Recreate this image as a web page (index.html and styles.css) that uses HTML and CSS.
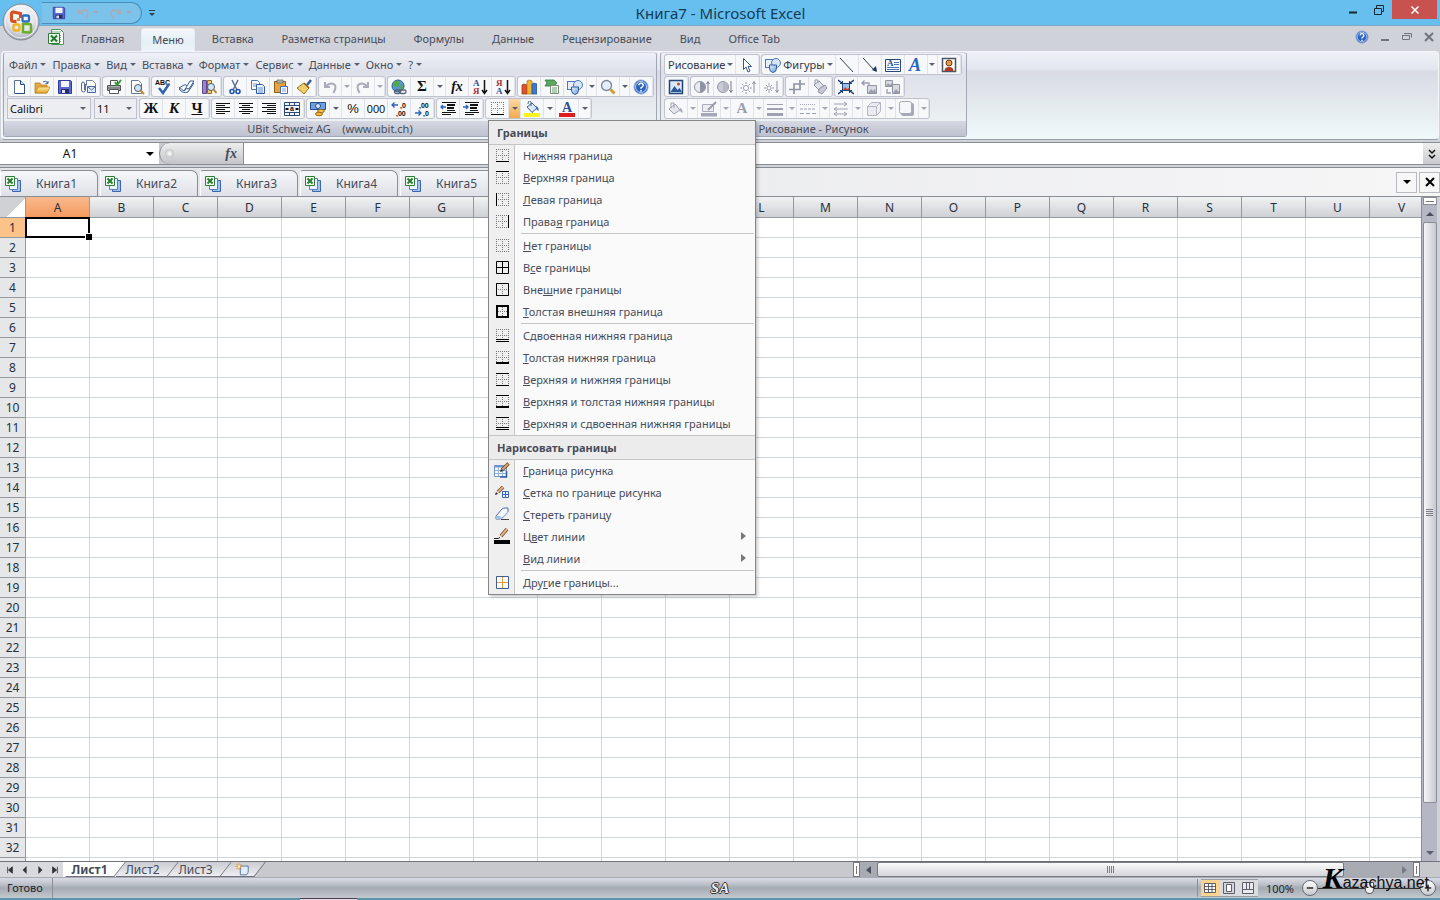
FILE: index.html
```html
<!DOCTYPE html>
<html lang="ru">
<head>
    <meta charset="UTF-8">
    <meta name="viewport" content="width=device-width, initial-scale=1.0">
    <title>Книга7 - Microsoft Excel</title>
    <link rel="stylesheet" href="styles.css">
</head>
<body>
    <!-- Icons -->
    <svg class="sprite" aria-hidden="true">
        <defs>
            <linearGradient id="g-blue" x1="0" y1="0" x2="1" y2="1"><stop offset="0" stop-color="#e8f2fd"/><stop offset="1" stop-color="#6f9ed6"/></linearGradient>
            <linearGradient id="g-gold" x1="0" y1="0" x2="0" y2="1"><stop offset="0" stop-color="#ffe9a0"/><stop offset="1" stop-color="#e5a52c"/></linearGradient>
            <radialGradient id="g-orb" cx=".5" cy=".35" r=".65"><stop offset="0" stop-color="#fff"/><stop offset=".6" stop-color="#e3e5ea"/><stop offset="1" stop-color="#a4a8b2"/></radialGradient>
        </defs>
        <symbol id="i-new" viewBox="0 0 16 16"><path d="M3.5 1.5h6l4 4v9h-10z" fill="#fff" stroke="#5a7396"/><path d="M9.5 1.5v4h4" fill="#c8daf0" stroke="#2c4c80"/><path d="M13.5 6v8.500h-9" fill="none" stroke="#2c4c80"/></symbol>
        <symbol id="i-open" viewBox="0 0 16 16"><path d="M1 14V4h5l1 2h6v8z" fill="#e8a93a" stroke="#a8741c" stroke-width=".7"/><path d="M1 14L4 8h12l-3 6z" fill="url(#g-gold)" stroke="#b57f20" stroke-width=".7"/><path d="M9 3q3-2 5 1m0-2v2.500h-2.500" fill="none" stroke="#3f66a5"/></symbol>
        <symbol id="i-save" viewBox="0 0 16 16"><path d="M1.500 1.500h12l1 1v12h-13z" fill="#5b68d0" stroke="#343a9c"/><path d="M4 2h8v6H4z" fill="#f0f4fb"/><path d="M4 10h8v4H4z" fill="#252c66"/><path d="M5 11h3v3H5z" fill="#dde3f4"/></symbol>
        <symbol id="i-mail" viewBox="0 0 16 16"><path d="M6.500 6.500V1.500h6l3 3v5" fill="#fff" stroke="#6a7fa3"/><path d="M7.500 7.500h8v6h-8z" fill="#dce8f8" stroke="#4c6a9c"/><path d="M8 8l3.500 3L15 8" fill="none" stroke="#4c6a9c"/><path d="M5.500 5v6q0 2-2 2t-2-2V5q0-2 1.500-2T4.500 5v6" fill="none" stroke="#5a6f96"/></symbol>
        <symbol id="i-print" viewBox="0 0 16 16"><path d="M4.500 6V1.500h7V6" fill="#fff" stroke="#555"/><path d="M1.500 6.500h13v5h-13z" fill="#a9adb5" stroke="#555"/><path d="M3.500 10.500h9v4h-9z" fill="#fff" stroke="#555"/><path d="M2 9h12" stroke="#666"/><path d="M9 3l2 3 4-5" fill="none" stroke="#2e9a32" stroke-width="2"/></symbol>
        <symbol id="i-preview" viewBox="0 0 16 16"><path d="M2.500 1.500h7l3 3v10h-10z" fill="#fff" stroke="#66788f"/><circle cx="9" cy="9" r="3.500" fill="#cfe5f8" stroke="#4b5a70"/><path d="M11.500 11.500l3.500 3.500" stroke="#c58a2c" stroke-width="2"/></symbol>
        <symbol id="i-book" viewBox="0 0 16 16"><path d="M1 9l5-3q2-1 3 1l3-5h4l-5 8q-2-2-5 2-2-2-5-3z" fill="#fff" stroke="#36598f"/><path d="M9 7l-3 5M1 10q4 5 9 3l6-9" fill="none" stroke="#36598f"/></symbol>
        <symbol id="i-research" viewBox="0 0 16 16"><path d="M1.500 1.500h4v13h-4z" fill="#9f84c8" stroke="#5c4a8c"/><path d="M6.500 1.500h4v13h-4z" fill="#f2cb61" stroke="#936c25"/><circle cx="10" cy="8" r="3.500" fill="#d4e8f9" stroke="#4b5a70"/><path d="M12.500 10.500L15.500 14" stroke="#c58a2c" stroke-width="2"/></symbol>
        <symbol id="i-cut" viewBox="0 0 16 16"><path d="M5 1l5 10M11 1L6 11" stroke="#5b6f94" stroke-width="1.500"/><circle cx="5" cy="12.500" r="2" fill="none" stroke="#1f55b2" stroke-width="1.600"/><circle cx="11" cy="12.500" r="2" fill="none" stroke="#1f55b2" stroke-width="1.600"/></symbol>
        <symbol id="i-copy" viewBox="0 0 16 16"><path d="M1.500 1.500h6l2 2v7h-8z" fill="#fff" stroke="#4d74b5"/><path d="M3 5h4M3 7h4" stroke="#6c92cb"/><path d="M6.500 5.500h6l2 2v7h-8z" fill="#eaf2fd" stroke="#2f5ca8"/><path d="M8 9h5M8 11h5M8 13h5" stroke="#6c92cb"/></symbol>
        <symbol id="i-paste" viewBox="0 0 16 16"><path d="M1.500 2.500h11v11h-11z" fill="#e8a43a" stroke="#8c5c16"/><path d="M4 1h6v3H4z" fill="#aeb4be" stroke="#555" stroke-width=".6"/><path d="M7.500 7.500h7v7h-7z" fill="#fff" stroke="#4a6fab"/><path d="M9 10h4M9 12h4" stroke="#7f9fd0"/></symbol>
        <symbol id="i-brush" viewBox="0 0 16 16"><path d="M15 1l-4 5" stroke="#3d5d9b" stroke-width="2.500"/><path d="M8 4l5 5-5 6-7-6z" fill="#f0cf68" stroke="#a07828"/><path d="M8 4l5 5" stroke="#8c5e1a" stroke-width="1.500"/></symbol>
        <symbol id="i-undo" viewBox="0 0 16 16"><path d="M3 3v5h5" fill="none" stroke="#a9adb9" stroke-width="2"/><path d="M3.500 7.500q4-4 8-2.500t0 9" fill="none" stroke="#a9adb9" stroke-width="2"/></symbol>
        <symbol id="i-redo" viewBox="0 0 16 16"><path d="M13 3v5H8" fill="none" stroke="#a9adb9" stroke-width="2"/><path d="M12.500 7.500q-4-4-8-2.500t0 9" fill="none" stroke="#a9adb9" stroke-width="2"/></symbol>
        <symbol id="i-link" viewBox="0 0 16 16"><circle cx="7" cy="7" r="6" fill="#5b97cf" stroke="#2c5f93"/><path d="M3 3q3-2 5-1l1 3-3 3-3-1zM8 8l4-2q0 4-3 5z" fill="#53a848"/><rect x="3.500" y="11" width="6" height="3.500" rx="1.700" fill="none" stroke="#56647d" stroke-width="1.300"/><rect x="8.500" y="11" width="6.500" height="3.500" rx="1.700" fill="none" stroke="#56647d" stroke-width="1.300"/></symbol>
        <symbol id="i-chart" viewBox="0 0 16 16"><path d="M1 6l2-1 3 1v9H1z" fill="#e0532c" stroke="#8d2b14" stroke-width=".7"/><path d="M6 2l2-1 3 1v13H6z" fill="#f4b531" stroke="#a8701a" stroke-width=".7"/><path d="M11 5l2-1 3 1v10h-5z" fill="#3e79cf" stroke="#224b91" stroke-width=".7"/></symbol>
        <symbol id="i-smart" viewBox="0 0 16 16"><path d="M1 1h9l3 3-3 3H1l2-3z" fill="#5ca860" stroke="#2f7638" stroke-width=".8"/><path d="M6.500 6.500h8v8h-8z" fill="#f6f9f4" stroke="#7b8b7c"/><path d="M8 9h5M8 11h5M8 13h5" stroke="#6ea273"/></symbol>
        <symbol id="i-shapes" viewBox="0 0 16 16"><rect x=".500" y="2.500" width="8" height="8" fill="#e6effa" stroke="#4d79b8"/><circle cx="11" cy="6" r="4.500" fill="#d6e6f8" stroke="#4d79b8"/><path d="M4.500 8h7v3q0 4-3.500 4.500Q4.500 15 4.500 11z" fill="url(#g-blue)" stroke="#2e5d9e"/></symbol>
        <symbol id="i-zoom" viewBox="0 0 16 16"><circle cx="6.500" cy="6.500" r="5" fill="#e2effb" stroke="#7d8798" stroke-width="1.300"/><path d="M10.500 10.500l4 4" stroke="#d39b32" stroke-width="3"/></symbol>
        <symbol id="i-help" viewBox="0 0 16 16"><circle cx="8" cy="8" r="7" fill="#2a62c2" stroke="#8da9d6"/><circle cx="8" cy="8" r="5.500" fill="none" stroke="#e4edfa" stroke-width=".8"/><path d="M5.800 6.300Q6 4.200 8 4.200t2.200 2Q10.200 7.500 8 8.800v1" fill="none" stroke="#fff" stroke-width="1.500"/><path d="M7.200 11h1.600v1.500H7.200z" fill="#fff"/></symbol>
        <symbol id="i-left" viewBox="0 0 16 16"><path d="M1 2h14v1H1zM1 4h9v1H1zM1 6h14v1H1zM1 8h9v1H1zM1 10h14v1H1zM1 12h9v1H1z" fill="#111"/></symbol>
        <symbol id="i-center" viewBox="0 0 16 16"><path d="M1 2h14v1H1zM4 4h8v1H4zM1 6h14v1H1zM4 8h8v1H4zM1 10h14v1H1zM4 12h8v1H4z" fill="#111"/></symbol>
        <symbol id="i-right" viewBox="0 0 16 16"><path d="M1 2h14v1H1zM6 4h9v1H6zM1 6h14v1H1zM6 8h9v1H6zM1 10h14v1H1zM6 12h9v1H6z" fill="#111"/></symbol>
        <symbol id="i-money" viewBox="0 0 16 16"><path d="M.500 1.500h15v7H.500z" fill="#6ea0dc" stroke="#244f94"/><circle cx="8" cy="5" r="2.500" fill="#d9e8f8" stroke="#244f94"/><ellipse cx="11" cy="10" rx="3.500" ry="1.500" fill="#f8cf55" stroke="#9a6a14"/><ellipse cx="9" cy="13" rx="3.500" ry="1.800" fill="#f2b534" stroke="#9a6a14"/></symbol>
        <symbol id="i-outdent" viewBox="0 0 16 16"><path d="M2 1h14v1H2zM7 3h8v2H7zM7 6h7v2H7zM7 9h8v1H7zM2 11h14v1H2zM2 13h9v1H2z" fill="#111"/><path d="M6 6H1M3 4L1 6l2 2" fill="none" stroke="#2c62bb" stroke-width="1.300"/></symbol>
        <symbol id="i-indent" viewBox="0 0 16 16"><path d="M2 1h14v1H2zM7 3h8v2H7zM7 6h7v2H7zM7 9h8v1H7zM2 11h14v1H2zM2 13h9v1H2z" fill="#111"/><path d="M0 6h5M3 4l2 2-2 2" fill="none" stroke="#2c62bb" stroke-width="1.300"/></symbol>
        <symbol id="i-fill" viewBox="0 0 16 16"><path d="M0 12h16v4H0z" fill="#f8f31e"/><path d="M3 6l5-4 5 5-5 4.500z" fill="#dbe6f5" stroke="#456089"/><path d="M7 5V1.500Q7 0 5.500 0T4 3" fill="none" stroke="#456089"/><path d="M12 5q3 1 2.500 5Q12 9 12 7z" fill="#3d6cb5"/></symbol>
        <symbol id="i-cursor" viewBox="0 0 16 16"><path d="M4.500 1.500v11l2.500-2.500 2 5 2-1-2-4.500h3.500z" fill="#fff" stroke="#33578f"/></symbol>
        <symbol id="i-line" viewBox="0 0 16 16"><path d="M1 1l13 14" stroke="#2b3c5c"/></symbol>
        <symbol id="i-arrow" viewBox="0 0 16 16"><path d="M1 1l12 13" stroke="#2b3c5c"/><path d="M15 15l-5-2 4-4z" fill="#1c335e"/></symbol>
        <symbol id="i-clip" viewBox="0 0 16 16"><path d="M1.500 1.500h13v13h-13z" fill="#fff" stroke="#4c5566" stroke-width="1.500"/><circle cx="8" cy="6" r="3" fill="#e89a4c" stroke="#6b3a12"/><path d="M3.500 14q0-4 4.500-4t4.500 4z" fill="#b13a22"/></symbol>
        <symbol id="i-picture" viewBox="0 0 16 16"><path d="M1.500 1.500h13v13h-13z" fill="#d9e9fa" stroke="#24457a" stroke-width="1.500"/><path d="M2.500 13l4-6 3 4 2-2 2.500 4z" fill="#2a5698"/><circle cx="10.500" cy="5" r="1.500" fill="#d0452c"/></symbol>
        <symbol id="i-contrast-up" viewBox="0 0 16 16"><circle cx="6" cy="8" r="5.500" fill="#e9ebf1" stroke="#9095a4"/><path d="M6 2.500a5.500 5.500 0 0 1 0 11z" fill="#8f94a3"/><path d="M14 14V3M12.500 5L14 2.500 15.500 5" fill="none" stroke="#767b8b"/></symbol>
        <symbol id="i-contrast-down" viewBox="0 0 16 16"><circle cx="6" cy="8" r="5.500" fill="#c9ccd6" stroke="#9095a4"/><path d="M6 2.500a5.500 5.500 0 0 1 0 11z" fill="#b5b8c4"/><path d="M14 2v11M12.500 11l1.500 2.500L15.500 11" fill="none" stroke="#767b8b"/></symbol>
        <symbol id="i-bright-up" viewBox="0 0 16 16"><circle cx="6" cy="9" r="2.500" fill="#fff" stroke="#9a9eac"/><path d="M6 3v2M6 13v2M0 9h2M10 9h2M2 5l1.500 1.500M10 5L8.500 6.500M2 13l1.500-1.500M10 13l-1.500-1.500" stroke="#9a9eac"/><path d="M14 14V3M12.500 5L14 2.500 15.500 5" fill="none" stroke="#8a8e9d"/></symbol>
        <symbol id="i-bright-down" viewBox="0 0 16 16"><circle cx="6" cy="9" r="2" fill="#fff" stroke="#9a9eac"/><path d="M6 4v2M6 12v2M1 9h2M9 9h2M3 6l1 1M9 6L8 7M3 12l1-1M9 12l-1-1" stroke="#9a9eac"/><path d="M14 2v11M12.500 11l1.500 2.500L15.500 11" fill="none" stroke="#8a8e9d"/></symbol>
        <symbol id="i-crop" viewBox="0 0 16 16"><path d="M5 15V5h11M0 10.500h11V1" fill="none" stroke="#8f94a3" stroke-width="1.700"/></symbol>
        <symbol id="i-recolor" viewBox="0 0 16 16"><path d="M2 6l5-4 5 5-5 4z" fill="#dfe1e8" stroke="#9095a4"/><path d="M8 9l5-3 2 3-5 6-4-2z" fill="#c6c9d3" stroke="#9095a4"/><path d="M6 4V1H3v4" fill="none" stroke="#9095a4"/></symbol>
        <symbol id="i-compress" viewBox="0 0 16 16"><path d="M4.500 4.500h7v7h-7z" fill="#9cc0ea" stroke="#24457a"/><path d="M5 11l2-3 2 2 2-1v2z" fill="#b8452f"/><path d="M0 1l4 3M16 1l-4 3M0 15l4-3M16 15l-4-3" stroke="#1f3f78" stroke-width="1.500"/><path d="M2 4.500h2.500V2M14 4.500h-2.500V2M2 11.500h2.500V14M14 11.500h-2.500V14" fill="none" stroke="#1f3f78"/></symbol>
        <symbol id="i-change" viewBox="0 0 16 16"><path d="M6.500 6.500h9v8h-9z" fill="#d9dbe2" stroke="#9095a4"/><path d="M7 14l3-4 2 2 2-2 1 4z" fill="#9a9eab"/><path d="M1 4h7v3M3.500 1.500L1 4l2.500 2.500" fill="none" stroke="#9a9eac" stroke-width="1.300"/></symbol>
        <symbol id="i-reset" viewBox="0 0 16 16"><path d="M1.500 1.500h7v6h-7zM8.500 5.500h7v9h-7z" fill="#d9dbe2" stroke="#9095a4"/><path d="M2 7l2-3 2 2 2-2v3zM9 14l3-4 3 3v1z" fill="#9a9eab"/><path d="M3 10v4h4" fill="none" stroke="#9a9eac" stroke-width="1.300"/></symbol>
        <symbol id="i-fill-off" viewBox="0 0 16 16"><path d="M1 8l6-5 5 6-6 4z" fill="#e4e6ec" stroke="#9ea2b0"/><path d="M6 7V2H3v5" fill="none" stroke="#9ea2b0"/><path d="M12 7q3 1 2.500 5Q12 11 12 9z" fill="#a3a7b4"/></symbol>
        <symbol id="i-outline-off" viewBox="0 0 16 16"><path d="M0 12h16v3.500H0z" fill="#a3a7b6"/><path d="M1.500 3.500h11v7h-11z" fill="#eceef3" stroke="#a9adb9"/><path d="M15 1L7 9" stroke="#989cab" stroke-width="2"/></symbol>
        <symbol id="i-weight" viewBox="0 0 16 16"><path d="M0 3h16v1H0zM0 7h16v2H0zM0 12h16v3H0z" fill="#9ea2b2"/></symbol>
        <symbol id="i-dash" viewBox="0 0 16 16"><path d="M0 3.500h16" stroke="#9ea2b2" stroke-dasharray="1 1"/><path d="M0 8h16" stroke="#9ea2b2" stroke-dasharray="3 1"/><path d="M0 12.500h16" stroke="#9ea2b2" stroke-dasharray="4 2"/></symbol>
        <symbol id="i-arrows" viewBox="0 0 16 16"><path d="M1 3h13M11 1l3 2-3 2M15 8H1M4 6L1 8l3 2M1 13h13M4 11l-3 2 3 2M11 11l3 2-3 2" fill="none" stroke="#9ea2b2"/></symbol>
        <symbol id="i-cube" viewBox="0 0 16 16"><path d="M1.500 5.500h9v9h-9zM1.500 5.500l4-4h9l-4 4M14.500 1.500v9l-4 4" fill="#e9ebf0" stroke="#b4b7c2"/></symbol>
        <symbol id="i-shadow" viewBox="0 0 16 16"><rect x="2" y="2" width="13" height="13" rx="2" fill="#a5a9b8"/><rect x=".500" y=".500" width="12" height="12" rx="2" fill="#f6f7fa" stroke="#a5a9b8"/></symbol>
        <symbol id="i-xl" viewBox="0 0 16 16"><path d="M3.500.500h9l3 3v12h-12z" fill="#fff" stroke="#4d9a58"/><path d="M4 3h9" stroke="#7db884"/><path d="M12.500 6v8" stroke="#7db884" stroke-dasharray="1 1"/><path d="M.500 4.500h11v10H.500z" fill="#eaf6ea" stroke="#2f7d37"/><path d="M3 6.500l6 6M9 6.500l-6 6" fill="none" stroke="#237a2c" stroke-width="2"/></symbol>
        <symbol id="i-books" viewBox="0 0 16 16"><path d="M7.500 4.500h8v11h-8z" fill="#9fc3ee" stroke="#3a67ab"/><path d="M4.500 2.500h8v11h-8z" fill="#e9f2fd" stroke="#5b7fb8"/><path d="M.500.500h9v9h-9z" fill="#f1faf0" stroke="#2f7d37"/><path d="M2.500 2.500l5 5M7.500 2.500l-5 5" stroke="#237a2c" stroke-width="1.800"/></symbol>

        <!-- Border icons share one dotted base -->
        <symbol id="i-none" viewBox="0 0 13 13"><path d="M0 .500h13M0 6.500h13M0 12.500h13M.500 0v13M6.500 0v13M12.500 0v13" stroke="#777" stroke-dasharray="1 1" shape-rendering="crispEdges"/></symbol>
        <symbol id="i-bottom" viewBox="0 0 13 13"><use href="#i-none"/><path d="M0 12h13v1H0z"/></symbol>
        <symbol id="i-top" viewBox="0 0 13 13"><use href="#i-none"/><path d="M0 0h13v1H0z"/></symbol>
        <symbol id="i-bleft" viewBox="0 0 13 13"><use href="#i-none"/><path d="M0 0h1v13H0z"/></symbol>
        <symbol id="i-bright" viewBox="0 0 13 13"><use href="#i-none"/><path d="M12 0h1v13h-1z"/></symbol>
        <symbol id="i-all" viewBox="0 0 13 13"><path d="M.500.500h12v12H.500zM.500 6.500h12M6.500.500v12" fill="none" stroke="#000"/></symbol>
        <symbol id="i-outer" viewBox="0 0 13 13"><use href="#i-none"/><path d="M.500.500h12v12H.500z" fill="none" stroke="#000"/></symbol>
        <symbol id="i-thick" viewBox="0 0 13 13"><use href="#i-none"/><path d="M1 1h11v11H1z" fill="none" stroke="#000" stroke-width="2"/></symbol>
        <symbol id="i-double" viewBox="0 0 13 13"><use href="#i-none"/><path d="M0 9h13v4H0z" fill="#eee"/><path d="M0 10h13v1H0zM0 12h13v1H0z"/></symbol>
        <symbol id="i-thickb" viewBox="0 0 13 13"><use href="#i-none"/><path d="M0 11h13v2H0z"/></symbol>
        <symbol id="i-topbot" viewBox="0 0 13 13"><use href="#i-none"/><path d="M0 0h13v1H0zM0 12h13v1H0z"/></symbol>
        <symbol id="i-topthick" viewBox="0 0 13 13"><use href="#i-none"/><path d="M0 0h13v1H0zM0 11h13v2H0z"/></symbol>
        <symbol id="i-topdouble" viewBox="0 0 13 13"><use href="#i-double"/><path d="M0 0h13v1H0z"/></symbol>
        <symbol id="i-more" viewBox="0 0 13 13"><path d="M.500.500h12v12H.500z" fill="#fff" stroke="#3f5f94"/><path d="M1 6.500h11M6.500 1v11" stroke="#e59a3c"/></symbol>
        <symbol id="i-draw" viewBox="0 0 16 16"><path d="M.500 3.500h12v11H.500z" fill="#f6faff" stroke="#7397cb"/><path d="M.500 3.500h12v2H.500z" fill="#6b94d0"/><path d="M1 8.500h11M1 11.500h11M4.500 5v9M8.500 5v9" stroke="#93b1da"/><path d="M12.500 9v6H6" fill="none" stroke="#2f5c9e" stroke-width="1.500"/><path d="M14.500 1.500L8 8" stroke="#704a2c" stroke-width="3.500"/><path d="M14 2L8.500 7.500" stroke="#d9a273" stroke-width="2"/><path d="M6 10l1-3 2 2z" fill="#222"/></symbol>
        <symbol id="i-drawgrid" viewBox="0 0 16 16"><path d="M9 3L4 8" stroke="#704a2c" stroke-width="3.500"/><path d="M9 3L4 8" stroke="#e3b184" stroke-width="2"/><path d="M1 11l1-3 2 2z" fill="#222"/><path d="M8.500 7.500h6v6h-6zM8.500 10.500h6M11.500 7.500v6" fill="#e7f0fc" stroke="#3a68b0"/></symbol>
        <symbol id="i-erase" viewBox="0 0 16 16"><path d="M2 10l6-7q1-1 3-1h3v4l-6 6q-1 1-3 1H2z" fill="#f3f7fd" stroke="#51709f"/><path d="M2 10h4l2 2 6-7v2l-6 6H2z" fill="#a3bfe4"/><path d="M7 13.500h8" stroke="#444"/></symbol>
        <symbol id="i-linecolor" viewBox="0 0 16 16"><path d="M0 12h16v4H0z"/><path d="M13 1L7 8" stroke="#704a2c" stroke-width="3.500"/><path d="M13 1L7 8" stroke="#e3b184" stroke-width="2"/><path d="M0 10.500h4l2-1" fill="none" stroke="#222"/></symbol>
        <symbol id="i-office" viewBox="0 0 38 38"><circle cx="19" cy="19" r="18" fill="url(#g-orb)" stroke="#7d8796"/><circle cx="19" cy="19" r="16" fill="none" stroke="#fff" stroke-opacity=".8"/><path d="M18.500 15V10.500l-7-1.500q-2 0-2 2v6q0 1.500 2 1.500h3" fill="none" stroke="#d8501e" stroke-width="3"/><rect x="20.500" y="12.500" width="6.500" height="6" rx="1.500" fill="none" stroke="#2e6fc4" stroke-width="2.300"/><rect x="11.500" y="21.500" width="6" height="6" rx="1.500" fill="none" stroke="#f0b322" stroke-width="2.300"/><path d="M21 21h6.500q1.500 0 1.500 2v5q0 1.500-2 1.500l-6-.500z" fill="none" stroke="#6cae2c" stroke-width="2.600"/><path d="M15 15h3v3h-3z" fill="#f0882c"/></symbol>
        <symbol id="i-newsheet" viewBox="0 0 16 16"><path d="M5.500 3.500h9v7l-2 3h-7z" fill="#e3eefb" stroke="#4c6a9a"/><path d="M4 0v8M0 4h8M1 1l6 6M7 1L1 7" stroke="#e0942a"/><circle cx="4" cy="4" r="1.500" fill="#fff3b5"/></symbol>
        <symbol id="i-v1" viewBox="0 0 14 14"><path d="M1.500 2.500h11v9h-11zM1.500 5.500h11M1.500 8.500h11M5.500 2.500v9M9 2.500v9" fill="#fff" stroke="#5a5f6a"/></symbol>
        <symbol id="i-v2" viewBox="0 0 14 14"><path d="M1.500 1.500h11v11h-11z" fill="#d4d6db" stroke="#5a5f6a"/><path d="M4.500 3.500h5v7h-5z" fill="#fff" stroke="#5a5f6a"/></symbol>
        <symbol id="i-v3" viewBox="0 0 14 14"><path d="M1.500 1.500h11v11h-11z" fill="#e9eaed" stroke="#5a5f6a"/><path d="M5.500 1.500v7h3v-7M1.500 8.500h11" fill="none" stroke="#5a5f6a"/></symbol>
    </svg>

    <header class="titlebar">
        <button class="office-button" aria-label="Office"><svg><use href="#i-office"/></svg></button>
        <div class="quick-access">
            <button aria-label="Сохранить"><svg class="ico small"><use href="#i-save"/></svg></button>
            <button aria-label="Отменить"><svg class="ico small"><use href="#i-undo"/></svg><i class="tri pale"></i></button>
            <button aria-label="Вернуть"><svg class="ico small"><use href="#i-redo"/></svg><i class="tri pale"></i></button>
        </div>
        <button class="qa-more" aria-label="Настройка панели"><i class="tri"></i></button>
        <h1>Книга7 - Microsoft Excel</h1>
        <div class="window-buttons">
            <button aria-label="Свернуть"><svg viewBox="0 0 12 12"><path d="M2 8.500h8" stroke="#14262f" stroke-width="2"/></svg></button>
            <button aria-label="Развернуть"><svg viewBox="0 0 12 12"><path d="M1.500 4.500h7v6h-7zM3.500 4v-2.500h7v6H9" fill="none" stroke="#14262f"/></svg></button>
            <button class="close" aria-label="Закрыть"><svg viewBox="0 0 12 12"><path d="M2.500 2.500l7 7M9.500 2.500l-7 7" stroke="#fff" stroke-width="1.500"/></svg></button>
        </div>
    </header>

    <nav class="ribbon-tabs">
        <svg class="ico"><use href="#i-xl"/></svg>
        <button>Главная</button>
        <button class="active">Меню</button>
        <button>Вставка</button>
        <button>Разметка страницы</button>
        <button>Формулы</button>
        <button>Данные</button>
        <button>Рецензирование</button>
        <button>Вид</button>
        <button>Office Tab</button>
        <div class="doc-buttons">
            <button aria-label="Справка"><svg class="ico small"><use href="#i-help"/></svg></button>
            <button aria-label="Свернуть книгу"><svg viewBox="0 0 12 12"><path d="M2 9h8" stroke="#70757f" stroke-width="2"/></svg></button>
            <button aria-label="Восстановить книгу"><svg viewBox="0 0 12 12"><path d="M1.500 4.500h7v4h-7zM3 2.500h7.500v4" fill="none" stroke="#70757f"/><path d="M1 4h8v1H1z" fill="#70757f"/></svg></button>
            <button aria-label="Закрыть книгу"><svg viewBox="0 0 12 12"><path d="M2 2l8 8M10 2l-8 8" stroke="#70757f" stroke-width="2"/></svg></button>
        </div>
    </nav>

    <div class="ribbon">
        <section class="panel panel-main">
            <div class="menubar">
                <button>Файл<i class="tri"></i></button>
                <button>Правка<i class="tri"></i></button>
                <button>Вид<i class="tri"></i></button>
                <button>Вставка<i class="tri"></i></button>
                <button>Формат<i class="tri"></i></button>
                <button>Сервис<i class="tri"></i></button>
                <button>Данные<i class="tri"></i></button>
                <button>Окно<i class="tri"></i></button>
                <button>?<i class="tri"></i></button>
            </div>
            <div class="toolrow">
                <div class="group">
                    <button aria-label="Создать"><svg class="ico"><use href="#i-new"/></svg></button>
                    <button aria-label="Открыть"><svg class="ico"><use href="#i-open"/></svg></button>
                    <button aria-label="Сохранить"><svg class="ico"><use href="#i-save"/></svg></button>
                    <button aria-label="Отправить"><svg class="ico"><use href="#i-mail"/></svg></button>
                </div>
                <div class="group">
                    <button aria-label="Печать"><svg class="ico"><use href="#i-print"/></svg></button>
                    <button aria-label="Просмотр"><svg class="ico"><use href="#i-preview"/></svg></button>
                </div>
                <div class="group">
                    <button aria-label="Орфография"><svg class="ico" viewBox="0 0 16 16"><text class="abc" x="0" y="6">ABC</text><path d="M4 9l4 5 6-9" fill="none" stroke="#2f62b4" stroke-width="2.500"/></svg></button>
                    <button aria-label="Тезаурус"><svg class="ico"><use href="#i-book"/></svg></button>
                    <button aria-label="Справочники"><svg class="ico"><use href="#i-research"/></svg></button>
                </div>
                <div class="group">
                    <button aria-label="Вырезать"><svg class="ico"><use href="#i-cut"/></svg></button>
                    <button aria-label="Копировать"><svg class="ico"><use href="#i-copy"/></svg></button>
                    <button aria-label="Вставить"><svg class="ico"><use href="#i-paste"/></svg></button>
                    <button aria-label="Формат по образцу"><svg class="ico"><use href="#i-brush"/></svg></button>
                </div>
                <div class="group">
                    <button aria-label="Отменить"><svg class="ico"><use href="#i-undo"/></svg></button>
                    <button class="drop" aria-label="Список отмены"><i class="tri pale"></i></button>
                    <button aria-label="Вернуть"><svg class="ico"><use href="#i-redo"/></svg></button>
                    <button class="drop" aria-label="Список возврата"><i class="tri pale"></i></button>
                </div>
                <div class="group">
                    <button aria-label="Гиперссылка"><svg class="ico"><use href="#i-link"/></svg></button>
                    <button class="glyph" aria-label="Сумма">Σ</button>
                    <button class="drop wide" aria-label="Другие функции"><i class="tri"></i></button>
                    <button class="glyph fx" aria-label="Функция">fx</button>
                    <button aria-label="По возрастанию"><svg class="ico" viewBox="0 0 16 16"><text class="letter blue" x="1" y="7">А</text><text class="letter red" x="1" y="15">Я</text><path d="M12.500 1v13M10 11l2.500 3.500L15 11" fill="none" stroke="#111" stroke-width="1.500"/></svg></button>
                    <button aria-label="По убыванию"><svg class="ico" viewBox="0 0 16 16"><text class="letter red" x="1" y="7">Я</text><text class="letter blue" x="1" y="15">А</text><path d="M12.500 1v13M10 11l2.500 3.500L15 11" fill="none" stroke="#111" stroke-width="1.500"/></svg></button>
                </div>
                <div class="group">
                    <button aria-label="Диаграмма"><svg class="ico"><use href="#i-chart"/></svg></button>
                    <button aria-label="SmartArt"><svg class="ico"><use href="#i-smart"/></svg></button>
                    <button aria-label="Фигуры"><svg class="ico"><use href="#i-shapes"/></svg></button>
                    <button class="drop" aria-label="Список фигур"><i class="tri"></i></button>
                    <button aria-label="Масштаб"><svg class="ico"><use href="#i-zoom"/></svg></button>
                    <button class="drop" aria-label="Список масштабов"><i class="tri"></i></button>
                    <button aria-label="Справка"><svg class="ico"><use href="#i-help"/></svg></button>
                </div>
            </div>
            <div class="toolrow">
                <label class="combo font-name"><select aria-label="Шрифт"><option>Calibri</option></select><i class="tri"></i></label>
                <label class="combo font-size"><select aria-label="Размер шрифта"><option>11</option></select><i class="tri"></i></label>
                <div class="group">
                    <button class="glyph" aria-label="Полужирный">Ж</button>
                    <button class="glyph" aria-label="Курсив"><i>К</i></button>
                    <button class="glyph" aria-label="Подчёркнутый"><u>Ч</u></button>
                </div>
                <div class="group">
                    <button aria-label="По левому краю"><svg class="ico"><use href="#i-left"/></svg></button>
                    <button aria-label="По центру"><svg class="ico"><use href="#i-center"/></svg></button>
                    <button aria-label="По правому краю"><svg class="ico"><use href="#i-right"/></svg></button>
                    <button aria-label="Объединить ячейки"><svg class="ico" viewBox="0 0 16 16"><path d="M.500 1.500h15v13H.500zM.500 4.500h15M.500 11.500h15M5.500 1.500v3M10.500 1.500v3M5.500 11.500v3M10.500 11.500v3" fill="#f0f4fa" stroke="#2b4877"/><text class="tiny" x="6" y="10">a</text><path d="M1.500 8h3M11.500 8h3" stroke="#111" stroke-width="2"/></svg></button>
                </div>
                <div class="group">
                    <button aria-label="Денежный формат"><svg class="ico"><use href="#i-money"/></svg></button>
                    <button class="drop wide" aria-label="Список валют"><i class="tri"></i></button>
                    <button class="number percent-sign">%</button>
                    <button class="number">000</button>
                    <button aria-label="Увеличить разрядность"><svg class="ico" viewBox="0 0 16 16"><path d="M7 4H1M3.500 1.500L1 4l2.500 2.500" fill="none" stroke="#2c62bb" stroke-width="1.300"/><text class="tiny" x="9" y="7">,0</text><text class="tiny" x="5" y="15">,00</text></svg></button>
                    <button aria-label="Уменьшить разрядность"><svg class="ico" viewBox="0 0 16 16"><text class="tiny" x="5" y="7">,00</text><path d="M1 12h6M4.500 9.500L7 12l-2.500 2.500" fill="none" stroke="#2c62bb" stroke-width="1.300"/><text class="tiny" x="9" y="15">,0</text></svg></button>
                </div>
                <div class="group">
                    <button aria-label="Уменьшить отступ"><svg class="ico"><use href="#i-outdent"/></svg></button>
                    <button aria-label="Увеличить отступ"><svg class="ico"><use href="#i-indent"/></svg></button>
                </div>
                <div class="group has-menu">
                    <button aria-label="Границы"><svg class="ico border-ico"><use href="#i-bottom"/></svg></button>
                    <button class="drop wide pressed" aria-label="Список границ"><i class="tri"></i></button>
                    <button aria-label="Заливка"><svg class="ico"><use href="#i-fill"/></svg></button>
                    <button class="drop wide" aria-label="Цвет заливки"><i class="tri"></i></button>
                    <button aria-label="Цвет текста"><svg class="ico" viewBox="0 0 16 16"><path d="M0 12h16v4H0z" fill="#e01b1b"/><text class="letter blue big" x="3" y="11">A</text></svg></button>
                    <button class="drop wide" aria-label="Список цветов"><i class="tri"></i></button>

                    <!-- Borders drop-down -->
                    <div class="menu">
                        <h2>Границы</h2>
                        <button><svg><use href="#i-bottom"/></svg><span>Ни<u>ж</u>няя граница</span></button>
                        <button><svg><use href="#i-top"/></svg><span><u>В</u>ерхняя граница</span></button>
                        <button><svg><use href="#i-bleft"/></svg><span><u>Л</u>евая граница</span></button>
                        <button><svg><use href="#i-bright"/></svg><span>Права<u>я</u> граница</span></button>
                        <hr>
                        <button><svg><use href="#i-none"/></svg><span><u>Н</u>ет границы</span></button>
                        <button><svg><use href="#i-all"/></svg><span>В<u>с</u>е границы</span></button>
                        <button><svg><use href="#i-outer"/></svg><span>Вне<u>ш</u>ние границы</span></button>
                        <button><svg><use href="#i-thick"/></svg><span><u>Т</u>олстая внешняя граница</span></button>
                        <hr>
                        <button><svg><use href="#i-double"/></svg><span>С<u>д</u>военная нижняя граница</span></button>
                        <button><svg><use href="#i-thickb"/></svg><span><u>Т</u>олстая нижняя граница</span></button>
                        <button><svg><use href="#i-topbot"/></svg><span><u>В</u>ерхняя и нижняя границы</span></button>
                        <button><svg><use href="#i-topthick"/></svg><span><u>В</u>ерхняя и толстая нижняя границы</span></button>
                        <button><svg><use href="#i-topdouble"/></svg><span><u>В</u>ерхняя и сдвоенная нижняя границы</span></button>
                        <h2 class="second">Нарисовать границы</h2>
                        <button><svg class="ico"><use href="#i-draw"/></svg><span><u>Г</u>раница рисунка</span></button>
                        <button><svg class="ico"><use href="#i-drawgrid"/></svg><span><u>С</u>етка по границе рисунка</span></button>
                        <button><svg class="ico"><use href="#i-erase"/></svg><span><u>С</u>тереть границу</span></button>
                        <button class="sub"><svg class="ico"><use href="#i-linecolor"/></svg><span>Ц<u>в</u>ет линии</span></button>
                        <button class="sub"><svg class="ico"></svg><span><u>В</u>ид линии</span></button>
                        <hr>
                        <button><svg><use href="#i-more"/></svg><span>Дру<u>г</u>ие границы...</span></button>
                    </div>
                </div>
            </div>
            <footer>UBit Schweiz AG &nbsp;&nbsp; (www.ubit.ch)</footer>
        </section>

        <section class="panel panel-draw">
            <div class="toolrow">
                <div class="group">
                    <button class="label">Рисование<i class="tri"></i></button>
                    <button aria-label="Выбор объектов"><svg class="ico"><use href="#i-cursor"/></svg></button>
                </div>
                <div class="group">
                    <button class="label"><svg class="ico"><use href="#i-shapes"/></svg>Фигуры<i class="tri"></i></button>
                    <button aria-label="Линия"><svg class="ico"><use href="#i-line"/></svg></button>
                    <button aria-label="Стрелка"><svg class="ico"><use href="#i-arrow"/></svg></button>
                    <button aria-label="Надпись"><svg class="ico" viewBox="0 0 16 16"><path d="M.500 2.500h15v12H.500z" fill="#f4f8fd" stroke="#2b4877"/><text class="letter blue" x="2" y="9">A</text><path d="M9 5.500h5M9 7.500h5M2 10.500h12M2 12.500h12" stroke="#4a74b8"/></svg></button>
                    <button aria-label="WordArt"><svg class="ico" viewBox="0 0 16 16"><text class="wordart" x="1" y="14">A</text></svg></button>
                    <button class="drop" aria-label="Список WordArt"><i class="tri"></i></button>
                    <button aria-label="Клип"><svg class="ico"><use href="#i-clip"/></svg></button>
                </div>
            </div>
            <div class="toolrow">
                <div class="group">
                    <button aria-label="Рисунок"><svg class="ico"><use href="#i-picture"/></svg></button>
                </div>
                <div class="group">
                    <button aria-label="Больше контраст"><svg class="ico"><use href="#i-contrast-up"/></svg></button>
                    <button aria-label="Меньше контраст"><svg class="ico"><use href="#i-contrast-down"/></svg></button>
                    <button aria-label="Больше яркость"><svg class="ico"><use href="#i-bright-up"/></svg></button>
                    <button aria-label="Меньше яркость"><svg class="ico"><use href="#i-bright-down"/></svg></button>
                </div>
                <div class="group">
                    <button aria-label="Обрезка"><svg class="ico"><use href="#i-crop"/></svg></button>
                    <button aria-label="Перекрасить"><svg class="ico"><use href="#i-recolor"/></svg></button>
                </div>
                <div class="group">
                    <button aria-label="Сжатие рисунков"><svg class="ico"><use href="#i-compress"/></svg></button>
                    <button aria-label="Изменить рисунок"><svg class="ico"><use href="#i-change"/></svg></button>
                    <button aria-label="Сброс рисунка"><svg class="ico"><use href="#i-reset"/></svg></button>
                </div>
            </div>
            <div class="toolrow">
                <div class="group">
                    <button aria-label="Заливка фигуры"><svg class="ico"><use href="#i-fill-off"/></svg></button>
                    <button class="drop" aria-label="Цвет заливки фигуры"><i class="tri pale"></i></button>
                    <button aria-label="Контур фигуры"><svg class="ico"><use href="#i-outline-off"/></svg></button>
                    <button class="drop" aria-label="Цвет контура"><i class="tri pale"></i></button>
                    <button class="glyph off" aria-label="Цвет шрифта">A</button>
                    <button class="drop" aria-label="Цвета шрифта"><i class="tri pale"></i></button>
                    <button aria-label="Толщина"><svg class="ico"><use href="#i-weight"/></svg></button>
                    <button class="drop" aria-label="Список толщин"><i class="tri pale"></i></button>
                    <button aria-label="Штрихи"><svg class="ico"><use href="#i-dash"/></svg></button>
                    <button class="drop" aria-label="Список штрихов"><i class="tri pale"></i></button>
                    <button aria-label="Стрелки"><svg class="ico"><use href="#i-arrows"/></svg></button>
                    <button class="drop" aria-label="Список стрелок"><i class="tri pale"></i></button>
                    <button aria-label="Объём"><svg class="ico"><use href="#i-cube"/></svg></button>
                    <button class="drop" aria-label="Список объёмов"><i class="tri pale"></i></button>
                    <button aria-label="Тень"><svg class="ico"><use href="#i-shadow"/></svg></button>
                    <button class="drop" aria-label="Список теней"><i class="tri pale"></i></button>
                </div>
            </div>
            <footer>Рисование - Рисунок</footer>
        </section>
    </div>

    <div class="formula-bar">
        <input class="name-box" type="text" value="A1" aria-label="Имя ячейки">
        <button class="name-drop" aria-label="Список имён"><i class="tri"></i></button>
        <div class="fx-area"><span class="knob"></span><button class="fx" aria-label="Вставить функцию">fx</button></div>
        <input class="formula" type="text" aria-label="Строка формул">
        <button class="expand" aria-label="Развернуть строку формул"><svg viewBox="0 0 10 12"><path d="M2 2l3 3 3-3M2 7l3 3 3-3" fill="none" stroke="#111" stroke-width="1.500"/></svg></button>
    </div>

    <div class="book-tabs">
        <button class="book"><svg class="ico"><use href="#i-books"/></svg>Книга1</button>
        <button class="book"><svg class="ico"><use href="#i-books"/></svg>Книга2</button>
        <button class="book"><svg class="ico"><use href="#i-books"/></svg>Книга3</button>
        <button class="book"><svg class="ico"><use href="#i-books"/></svg>Книга4</button>
        <button class="book"><svg class="ico"><use href="#i-books"/></svg>Книга5</button>
        <div class="book-tools">
            <button aria-label="Список книг"><i class="tri"></i></button>
            <button aria-label="Закрыть вкладку"><svg viewBox="0 0 12 12"><path d="M2 2l8 8M10 2l-8 8" stroke="#000" stroke-width="2"/></svg></button>
        </div>
    </div>

    <main class="workspace">
        <div class="sheet">
            <table>
                <thead><tr id="columns"><th class="corner"></th></tr></thead>
                <tbody id="cells"></tbody>
            </table>
        </div>
        <div class="vscroll">
            <span class="split"></span>
            <button aria-label="Вверх"><i class="tri up"></i></button>
            <div class="thumb"></div>
            <div class="track"></div>
            <button aria-label="Вниз"><i class="tri down"></i></button>
        </div>
    </main>

    <div class="sheet-bar">
        <div class="sheet-nav">
            <button aria-label="Первый лист"><svg viewBox="0 0 10 10"><path d="M2 1v8M8 1v8L3 5z" stroke="#333" fill="#333"/></svg></button>
            <button aria-label="Предыдущий лист"><svg viewBox="0 0 10 10"><path d="M7 0v10L2 5z" fill="#333"/></svg></button>
            <button aria-label="Следующий лист"><svg viewBox="0 0 10 10"><path d="M3 0v10l5-5z" fill="#333"/></svg></button>
            <button aria-label="Последний лист"><svg viewBox="0 0 10 10"><path d="M8 1v8M2 1v8l5-4z" stroke="#333" fill="#333"/></svg></button>
        </div>
        <button class="sheet-tab active">Лист1</button>
        <button class="sheet-tab">Лист2</button>
        <button class="sheet-tab">Лист3</button>
        <button class="sheet-tab add" aria-label="Вставить лист"><svg><use href="#i-newsheet"/></svg></button>
        <div class="hscroll">
            <span class="split"></span>
            <button aria-label="Влево"><i class="tri left"></i></button>
            <div class="thumb"></div>
            <div class="track"></div>
            <button aria-label="Вправо"><i class="tri right"></i></button>
            <span class="split"></span>
        </div>
    </div>

    <footer class="statusbar">
        <span class="state">Готово</span>
        <span class="signature">SA</span>
        <div class="views">
            <button class="on" aria-label="Обычный"><svg><use href="#i-v1"/></svg></button>
            <button aria-label="Разметка"><svg><use href="#i-v2"/></svg></button>
            <button aria-label="Страничный"><svg><use href="#i-v3"/></svg></button>
        </div>
        <button class="percent">100%</button>
        <button class="round" aria-label="Уменьшить"><svg viewBox="0 0 10 10"><path d="M1 5h8" stroke="#333" stroke-width="2"/></svg></button>
        <input type="range" min="0" max="100" value="50" aria-label="Масштаб">
        <button class="round" aria-label="Увеличить"><svg viewBox="0 0 10 10"><path d="M1 5h8M5 1v8" stroke="#333" stroke-width="2"/></svg></button>
        <div class="watermark"><b>K</b>azachya.net</div>
    </footer>
    <div class="taskbar-edge"><span></span></div>

    <script src="script.js"></script>
</body>
</html>
```
FILE: styles.css
```css
* {
    box-sizing: border-box;
}
body {
    margin: 0;
    height: 100vh;
    display: flex;
    flex-direction: column;
    overflow: hidden;
    font-family: "Noto Sans", "Open Sans", sans-serif;
    font-size: 11px;
    color: #464c5a;
    background-color: #cfd2d9;
}
button, input, select {
    font: inherit;
    color: inherit;
    border: none;
    background: none;
    padding: 0;
    margin: 0;
}
button {
    display: flex;
    align-items: center;
    justify-content: center;
}
.sprite {
    position: absolute;
    width: 0;
    height: 0;
}
.ico {
    width: 16px;
    height: 16px;
    flex: none;
}
.ico.small {
    width: 14px;
    height: 14px;
}
/* Letters inside icons */
.abc, .tiny {
    font-family: "Liberation Sans", sans-serif;
    font-size: 7px;
    font-weight: bold;
    fill: #111;
}
.letter {
    font-family: "Liberation Serif", serif;
    font-size: 9px;
    font-weight: bold;
}
.letter.big {
    font-size: 14px;
}
.blue {
    fill: #2c4f96;
}
.red {
    fill: #a83232;
}
.wordart {
    font-family: "Liberation Serif", serif;
    font-size: 18px;
    font-weight: bold;
    font-style: italic;
    fill: #2865bd;
}
/* Small triangles */
.tri {
    width: 0;
    height: 0;
    flex: none;
    border: 3px solid transparent;
    border-top-color: #5b606c;
    border-bottom: none;
}
.tri.pale {
    border-top-color: #a3a7b3;
}
.tri.up {
    border: 4px solid transparent;
    border-bottom-color: #4b4f5c;
    border-top: none;
}
.tri.down {
    border-width: 4px;
    border-bottom: none;
}
.tri.left {
    border: 4px solid transparent;
    border-right: 5px solid #4b4f5c;
    border-left: none;
}
.tri.right {
    border: 4px solid transparent;
    border-left: 5px solid #777b87;
    border-right: none;
}
/* Title bar */
.titlebar {
    display: flex;
    align-items: center;
    position: relative;
    height: 26px;
    flex: none;
    padding-left: 42px;
    background-color: #67bff0;
    border-bottom: 1px solid #7fa9c6;
}
.office-button {
    position: absolute;
    left: 2px;
    top: 3px;
    z-index: 2;
}
.office-button svg {
    width: 38px;
    height: 38px;
}
.quick-access {
    display: flex;
    align-items: center;
    gap: 10px;
    width: 100px;
    height: 22px;
    padding-left: 10px;
    border: 1px solid #4a8db8;
    border-left: none;
    border-radius: 0 11px 11px 0;
    background-color: #7cc3ec;
}
.quick-access button {
    gap: 3px;
}
.qa-more {
    margin-left: 7px;
    padding-top: 2px;
    border-top: 1px solid #2b4456;
}
.qa-more .tri {
    border-top-color: #2b4456;
}
.titlebar h1 {
    flex: 1;
    margin: 0;
    padding-right: 54px;
    text-align: center;
    font-size: 15px;
    font-weight: normal;
    color: #123c55;
}
.window-buttons {
    display: flex;
    align-self: flex-start;
    padding-right: 3px;
}
.window-buttons button {
    width: 26px;
    height: 19px;
}
.window-buttons svg, .doc-buttons svg {
    width: 12px;
    height: 12px;
}
.window-buttons .close {
    width: 45px;
    background-color: #c85250;
}
/* Ribbon tabs */
.ribbon-tabs {
    display: flex;
    align-items: center;
    flex: none;
    height: 25px;
    padding-left: 48px;
}
.ribbon-tabs > .ico {
    margin: 0 3px 3px 0;
}
.ribbon-tabs > button {
    height: 23px;
    margin-top: 2px;
    padding: 0 14px 2px;
}
.ribbon-tabs > .active {
    padding: 0 10px 2px;
    margin-left: 3px;
    margin-right: 3px;
    border: 1px solid #e7eaf0;
    border-bottom: none;
    border-radius: 3px 3px 0 0;
    background: linear-gradient(#f4f6fa, #e4f1f7 60%, #eff3f8);
}
.doc-buttons {
    display: flex;
    align-items: center;
    gap: 10px;
    margin-left: auto;
    padding: 0 5px 4px 0;
}
.doc-buttons .ico {
    width: 14px;
    height: 14px;
}
/* Ribbon */
.ribbon {
    display: flex;
    align-items: flex-start;
    gap: 3px;
    flex: none;
    padding: 0 1px 2px;
    margin: 0 1px 2px;
    border: 1px solid #f4f6f9;
    border-bottom-color: #9a9da5;
    border-radius: 4px;
    background: linear-gradient(#eff1f7, #e3e5ef 20%, #d8dbe5 22%, #e4e9ed 60%, #eff9fb);
}
.panel {
    flex: none;
    border: 1px solid #a4a7b3;
    border-top-color: #d5d8e0;
    border-radius: 3px;
    background: linear-gradient(#eff1f7, #dde0ea 22%, #e6eaee 60%, #f0f6f8);
}
.panel-main {
    width: 654px;
}
.panel-draw {
    width: 307px;
}
.panel footer {
    height: 15px;
    margin-top: 2px;
    line-height: 15px;
    text-align: center;
    background: linear-gradient(#d6d8e2, #bec1cf);
}
.toolrow, .menubar {
    display: flex;
    gap: 3px;
    height: 21px;
    margin: 1px 0 0 4px;
}
.toolrow:first-child, .menubar {
    margin-top: 1px;
}
.menubar {
    gap: 6px;
    padding-left: 1px;
}
.menubar button {
    gap: 3px;
}
.group {
    display: flex;
    border: 1px solid #bfc2cc;
    border-width: 1px 0;
    border-radius: 3px;
    background-color: #f6f8fa;
    box-shadow: 1px 0 #c2c5ce, -1px 0 #c2c5ce;
}
.group > button {
    width: 23px;
    border-right: 1px solid #e0e3e9;
}
.group > .drop {
    width: 10px;
}
.group > .wide {
    width: 12px;
}
.group > .label {
    width: auto;
    padding: 0 2px 0 3px;
    gap: 2px;
    color: #333a48;
}
.group > .pressed {
    background: linear-gradient(#fbd9a5, #f3a94d);
}
.border-ico {
    width: 13px;
    height: 13px;
}
.glyph {
    font-family: "Liberation Serif", serif;
    font-size: 15px;
    font-weight: bold;
    color: #111;
}
.glyph.off {
    color: #9a9eae;
}
.fx {
    font-family: "Liberation Serif", serif;
    font-size: 14px;
    font-style: italic;
    font-weight: bold;
}
.number {
    font-family: "Liberation Sans", sans-serif;
    color: #111;
}
.percent-sign {
    font-size: 13px;
}
.combo {
    display: flex;
    align-items: center;
    position: relative;
    border: 1px solid #bfc2cc;
    background-color: #eceef2;
}
.combo select {
    width: 100%;
    height: 100%;
    padding-left: 2px;
    appearance: none;
    color: #111;
}
.combo .tri {
    position: absolute;
    right: 4px;
}
.font-name {
    width: 84px;
    margin-left: -1px;
}
.font-size {
    width: 43px;
}
/* Borders menu */
.has-menu {
    position: relative;
}
.menu {
    position: absolute;
    left: 2px;
    top: 21px;
    z-index: 10;
    width: 268px;
    border: 1px solid #868686;
    background: linear-gradient(90deg, #efefef 25px, #c5c5c5 25px, #c5c5c5 26px, #fafafa 26px);
    box-shadow: 2px 2px 3px rgba(0, 0, 0, 0.2);
}
.menu h2 {
    height: 24px;
    margin: 0;
    padding-left: 8px;
    line-height: 23px;
    font-size: 11px;
    font-weight: bold;
    background-color: #ececec;
    border-bottom: 1px solid #c5c5c5;
}
.menu .second {
    height: 25px;
    border-top: 1px solid #c5c5c5;
}
.menu button {
    justify-content: flex-start;
    width: 100%;
    height: 22px;
    padding: 0 0 2px 5px;
}
.menu svg {
    width: 13px;
    height: 13px;
    margin: 0 14px 0 2px;
}
.menu svg.ico {
    width: 16px;
    height: 16px;
    margin: 0 13px 0 0;
}
.menu hr {
    height: 2px;
    margin: 0 1px 0 32px;
    border: none;
    border-top: 1px solid #c5c5c5;
}
.menu .sub::after {
    content: "";
    margin: 0 9px 0 auto;
    border: 4px solid transparent;
    border-left: 5px solid #777;
    border-right: none;
}
/* Formula bar */
.formula-bar {
    display: flex;
    flex: none;
    height: 23px;
    border: 1px solid #8a8d94;
    border-width: 1px 0;
    background-color: #c9cbd0;
}
.name-box {
    width: 140px;
    text-align: center;
    font-size: 12px;
    color: #111;
    background-color: #fff;
}
.name-drop {
    width: 19px;
    background-color: #fff;
}
.name-drop .tri, .book-tools .tri {
    border-width: 4px;
    border-bottom: none;
    border-top-color: #000;
}
.fx-area {
    display: flex;
    align-items: center;
    justify-content: space-between;
    width: 85px;
    padding: 0 6px 0 5px;
    border: 1px solid #8a8d94;
    border-width: 0 1px;
    border-radius: 11px 0 0 11px;
    background: linear-gradient(#eee, #c3c4c8);
}
.knob {
    width: 9px;
    height: 9px;
    border-radius: 50%;
    background: radial-gradient(#fff, #a9abb2);
}
.formula {
    flex: 1;
    background-color: #fff;
}
.expand {
    width: 17px;
    background: linear-gradient(#eee, #c9cace);
}
.expand svg {
    width: 10px;
    height: 12px;
}
/* Workbook tabs */
.book-tabs {
    display: flex;
    align-items: flex-end;
    gap: 2px;
    flex: none;
    height: 30px;
    margin-top: 2px;
    border: 1px solid #8a8d94;
    border-width: 1px 0;
    background: linear-gradient(90deg, #e3e4e8, #f6f6f7);
}
.book {
    justify-content: flex-start;
    width: 98px;
    height: 26px;
    padding-left: 4px;
    gap: 15px;
    font-size: 12px;
    border: 1px solid #8a8d94;
    border-bottom: none;
    border-left-color: #fff;
    border-radius: 3px 7px 0 0;
    background: linear-gradient(#f6f7fa, #dfe1e8);
}
.book-tools {
    display: flex;
    gap: 2px;
    align-self: center;
    margin-left: auto;
}
.book-tools button {
    width: 21px;
    height: 21px;
    border: 1px solid #b9bbc1;
    background-color: #f7f7f8;
}
.book-tools svg {
    width: 12px;
    height: 12px;
}
/* Sheet */
.workspace {
    display: flex;
    flex: 1;
    min-height: 0;
    padding-right: 3px;
}
.sheet {
    flex: 1;
    overflow: hidden;
    background-color: #fff;
}
table {
    width: 1434px;
    table-layout: fixed;
    border-collapse: separate;
    border-spacing: 0;
}
th, td {
    width: 64px;
    height: 20px;
    padding: 0;
    border-right: 1px solid #d0d7dc;
    border-bottom: 1px solid #d0d7dc;
}
th {
    font-size: 12px;
    line-height: 19px;
    font-weight: normal;
    color: #26303c;
    border-color: #96999f;
    background-color: #e6e7e9;
}
thead th {
    height: 21px;
    background: linear-gradient(#f1f2f4, #cfd1d5);
}
.corner, tbody th {
    width: 26px;
}
.corner {
    background: linear-gradient(135deg, #cfd1d5 60%, #fff 60%);
}
thead .selected {
    background: linear-gradient(#f9b98c, #f59a60);
}
tbody .selected {
    background-color: #fbc28a;
}
td.current {
    position: relative;
}
td.current::before {
    content: "";
    position: absolute;
    inset: -1px -1px -1px -1px;
    border: 2px solid #000;
}
td.current::after {
    content: "";
    position: absolute;
    right: -3px;
    bottom: -3px;
    width: 6px;
    height: 6px;
    background-color: #000;
    border: 1px solid #fff;
    border-width: 1px 0 0 1px;
}
/* Scroll bars */
.vscroll {
    display: flex;
    flex-direction: column;
    align-items: center;
    width: 16px;
    background-color: #b5b8c4;
    border-left: 1px solid #8a8d94;
}
.vscroll .split {
    width: 14px;
    height: 8px;
    border: 1px solid #8a8d94;
    background: linear-gradient(#777, #777) center / 8px 1px no-repeat #fff;
}
.vscroll button {
    width: 15px;
    height: 17px;
}
.vscroll .thumb {
    flex: 14;
    width: 14px;
    border: 1px solid #8a8d94;
    border-radius: 2px;
    background: repeating-linear-gradient(#7b7e88 0 1px, transparent 1px 2px) center / 7px 7px no-repeat, linear-gradient(90deg, #f6f6f8, #c6c8d0);
}
.vscroll .track {
    flex: 1;
}
/* Sheet tabs */
.sheet-bar {
    display: flex;
    flex: none;
    height: 17px;
    border-top: 1px solid #6f727a;
    border-bottom: 1px solid #a9abb2;
    background-color: #c7c9cd;
}
.sheet-nav {
    display: flex;
    width: 63px;
    padding-left: 2px;
    background-color: #d8dade;
}
.sheet-nav button {
    width: 15px;
}
.sheet-nav svg {
    width: 8px;
    height: 8px;
}
.sheet-tab {
    position: relative;
    isolation: isolate;
    width: 53px;
    font-size: 12px;
}
.sheet-tab::before {
    content: "";
    position: absolute;
    inset: 0 -4px 0 4px;
    border: 1px solid #6f727a;
    border-width: 0 1px 1px 0;
    background: linear-gradient(#c9cbd0, #eceef1);
    transform: skewX(-38deg);
    z-index: -1;
}
.sheet-tab.active {
    font-weight: bold;
    background-color: #fff;
    z-index: 1;
}
.sheet-tab.active::before {
    left: 8px;
    border-left: none;
    background: #fff;
}
.sheet-tab.add {
    width: 34px;
}
.sheet-tab.add svg {
    width: 15px;
    height: 14px;
    margin-left: 6px;
}
.hscroll {
    display: flex;
    align-items: stretch;
    width: calc(40% - 9px);
    margin-left: auto;
    margin-right: 20px;
    background-color: #a9abb3;
}
.hscroll .split {
    width: 7px;
    border: 1px solid #777a82;
    background: linear-gradient(#777, #777) center / 1px 8px no-repeat #fff;
}
.hscroll button {
    width: 17px;
}
.hscroll .thumb {
    flex: 9;
    border: 1px solid #777a82;
    border-radius: 2px;
    background: repeating-linear-gradient(90deg, #7b7e88 0 1px, transparent 1px 2px) center / 7px 7px no-repeat, linear-gradient(#fafafa, #d5d6da);
}
.hscroll .track {
    flex: 1;
}
/* Status bar */
.statusbar {
    display: flex;
    align-items: center;
    position: relative;
    flex: none;
    height: 20px;
    padding-right: 4px;
    background: linear-gradient(#d9dbe6, #bfc2ca 30%, #a5abb3 50%, #c4c8cf);
}
.state {
    width: 53px;
    padding-left: 7px;
    line-height: 20px;
    color: #22262e;
    border-right: 1px solid #8d909a;
}
.signature {
    flex: 1;
    padding-left: 190px;
    text-align: center;
    font-family: "Liberation Serif", serif;
    font-size: 15px;
    font-style: italic;
    font-weight: bold;
    color: #eceef2;
    text-shadow: 1px 0 #333, -1px 0 #333, 0 1px #333, 0 -1px #333;
}
.views {
    display: flex;
    padding-left: 3px;
    margin-right: 8px;
    border-left: 1px solid #8d909a;
}
.views button {
    width: 19px;
    height: 18px;
    border: 1px solid #9a9ca3;
    border-width: 1px 0;
    background-color: #dadce0;
}
.views .on {
    background-color: #fbd491;
}
.views svg {
    width: 14px;
    height: 14px;
}
.percent {
    margin-right: 8px;
    color: #22262e;
}
.round {
    width: 16px;
    height: 16px;
    flex: none;
    border: 1px solid #666a74;
    border-radius: 50%;
    background: linear-gradient(#fff, #c4c7ce);
}
.round svg {
    width: 8px;
    height: 8px;
}
input[type="range"] {
    width: 102px;
    height: 14px;
    appearance: none;
    background: linear-gradient(#333, #333) center / 100% 1px no-repeat;
}
input[type="range"]::-webkit-slider-thumb {
    appearance: none;
    width: 9px;
    height: 12px;
    border: 1px solid #555;
    border-radius: 1px 1px 5px 5px;
    background-color: #f0f0f0;
}
.watermark {
    position: absolute;
    right: 11px;
    bottom: 5px;
    font-family: "Liberation Sans", sans-serif;
    font-size: 16px;
    line-height: 20px;
    color: #111;
}
.watermark b {
    font-family: "Liberation Serif", serif;
    font-style: italic;
    font-size: 30px;
    line-height: 20px;
    color: #000;
}
.taskbar-edge {
    flex: none;
    height: 2px;
    padding-left: 300px;
    background-color: #5b93a8;
}
.taskbar-edge span {
    display: block;
    width: 57px;
    height: 2px;
    background-color: #ead9de;
    border-top: 1px solid #4b3c56;
}
```
FILE: script.js
```js
// Column letters and numbered rows of the sheet
const letters = 'ABCDEFGHIJKLMNOPQRSTUV'.split('');
const rowCount = 32;

const columns = document.getElementById('columns');
letters.forEach((letter, index) => {
    const th = document.createElement('th');
    th.textContent = letter;
    if (index === 0) th.className = 'selected';
    columns.appendChild(th);
});

const cells = document.getElementById('cells');
// One blank row follows the numbered ones
for (let row = 1; row <= rowCount + 1; row++) {
    const tr = document.createElement('tr');
    const th = document.createElement('th');
    if (row <= rowCount) th.textContent = row;
    if (row === 1) th.className = 'selected';
    tr.appendChild(th);
    letters.forEach((letter, index) => {
        const td = document.createElement('td');
        if (row === 1 && index === 0) td.className = 'current';
        tr.appendChild(td);
    });
    cells.appendChild(tr);
}
```
